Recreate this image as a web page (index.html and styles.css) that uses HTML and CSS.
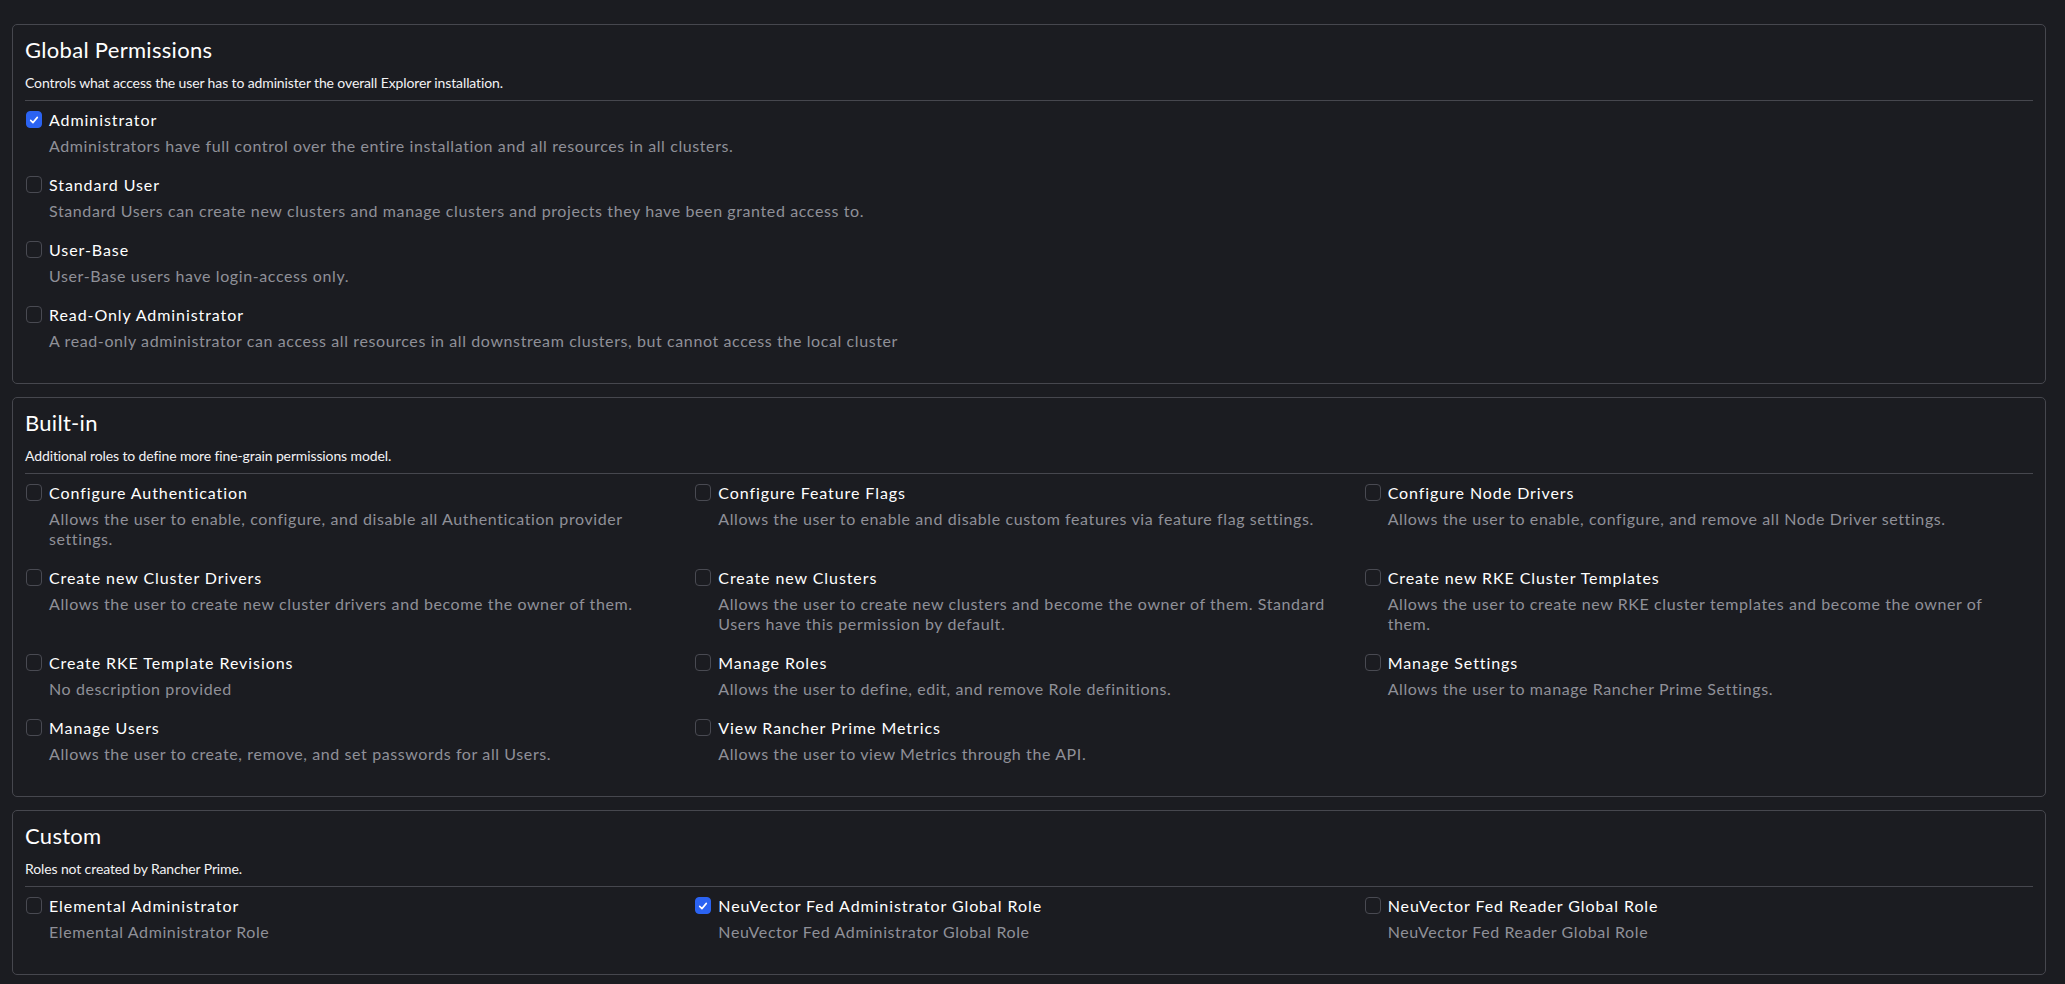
FILE: index.html
```html
<!DOCTYPE html>
<html lang="en">
<head>
<meta charset="utf-8">
<title>Global Permissions</title>
<link rel="stylesheet" href="styles.css">
</head>
<body>
<div class="page">

  <section class="box">
    <header class="box-head">
      <h3 class="box-title">Global Permissions</h3>
      <p class="box-sub">Controls what access the user has to administer the overall Explorer installation.</p>
    </header>
    <div class="list">
      <div class="item">
        <span class="cb checked"><svg viewBox="0 0 16 16"><path d="M4.2 8.4l2.6 2.6 5-6" /></svg></span>
        <div class="text"><div class="label">Administrator</div><div class="desc">Administrators have full control over the entire installation and all resources in all clusters.</div></div>
      </div>
      <div class="item">
        <span class="cb"></span>
        <div class="text"><div class="label">Standard User</div><div class="desc">Standard Users can create new clusters and manage clusters and projects they have been granted access to.</div></div>
      </div>
      <div class="item">
        <span class="cb"></span>
        <div class="text"><div class="label">User-Base</div><div class="desc">User-Base users have login-access only.</div></div>
      </div>
      <div class="item">
        <span class="cb"></span>
        <div class="text"><div class="label">Read-Only Administrator</div><div class="desc">A read-only administrator can access all resources in all downstream clusters, but cannot access the local cluster</div></div>
      </div>
    </div>
  </section>

  <section class="box">
    <header class="box-head">
      <h3 class="box-title">Built-in</h3>
      <p class="box-sub">Additional roles to define more fine-grain permissions model.</p>
    </header>
    <div class="grid">
      <div class="item">
        <span class="cb"></span>
        <div class="text"><div class="label">Configure Authentication</div><div class="desc">Allows the user to enable, configure, and disable all Authentication provider settings.</div></div>
      </div>
      <div class="item">
        <span class="cb"></span>
        <div class="text"><div class="label">Configure Feature Flags</div><div class="desc">Allows the user to enable and disable custom features via feature flag settings.</div></div>
      </div>
      <div class="item">
        <span class="cb"></span>
        <div class="text"><div class="label">Configure Node Drivers</div><div class="desc">Allows the user to enable, configure, and remove all Node Driver settings.</div></div>
      </div>
      <div class="item">
        <span class="cb"></span>
        <div class="text"><div class="label">Create new Cluster Drivers</div><div class="desc">Allows the user to create new cluster drivers and become the owner of them.</div></div>
      </div>
      <div class="item">
        <span class="cb"></span>
        <div class="text"><div class="label">Create new Clusters</div><div class="desc">Allows the user to create new clusters and become the owner of them. Standard Users have this permission by default.</div></div>
      </div>
      <div class="item">
        <span class="cb"></span>
        <div class="text"><div class="label">Create new RKE Cluster Templates</div><div class="desc">Allows the user to create new RKE cluster templates and become the owner of them.</div></div>
      </div>
      <div class="item">
        <span class="cb"></span>
        <div class="text"><div class="label">Create RKE Template Revisions</div><div class="desc">No description provided</div></div>
      </div>
      <div class="item">
        <span class="cb"></span>
        <div class="text"><div class="label">Manage Roles</div><div class="desc">Allows the user to define, edit, and remove Role definitions.</div></div>
      </div>
      <div class="item">
        <span class="cb"></span>
        <div class="text"><div class="label">Manage Settings</div><div class="desc">Allows the user to manage Rancher Prime Settings.</div></div>
      </div>
      <div class="item">
        <span class="cb"></span>
        <div class="text"><div class="label">Manage Users</div><div class="desc">Allows the user to create, remove, and set passwords for all Users.</div></div>
      </div>
      <div class="item">
        <span class="cb"></span>
        <div class="text"><div class="label">View Rancher Prime Metrics</div><div class="desc">Allows the user to view Metrics through the API.</div></div>
      </div>
    </div>
  </section>

  <section class="box">
    <header class="box-head">
      <h3 class="box-title">Custom</h3>
      <p class="box-sub">Roles not created by Rancher Prime.</p>
    </header>
    <div class="grid">
      <div class="item">
        <span class="cb"></span>
        <div class="text"><div class="label">Elemental Administrator</div><div class="desc">Elemental Administrator Role</div></div>
      </div>
      <div class="item">
        <span class="cb checked"><svg viewBox="0 0 16 16"><path d="M4.2 8.4l2.6 2.6 5-6" /></svg></span>
        <div class="text"><div class="label">NeuVector Fed Administrator Global Role</div><div class="desc">NeuVector Fed Administrator Global Role</div></div>
      </div>
      <div class="item">
        <span class="cb"></span>
        <div class="text"><div class="label">NeuVector Fed Reader Global Role</div><div class="desc">NeuVector Fed Reader Global Role</div></div>
      </div>
    </div>
  </section>

</div>
</body>
</html>
```

FILE: styles.css
```css
* { box-sizing: border-box; }

html, body {
  margin: 0;
  padding: 0;
  background: #1b1c21;
}

body {
  font-family: Lato, "Noto Sans", sans-serif;
  color: #ffffff;
}

.page {
  display: flex;
  flex-direction: column;
  gap: 13px;
  padding: 24px 19px 0 12px;
}

.box {
  border: 1px solid #46474e;
  border-radius: 5px;
  padding: 0 12px 12px;
}

.box-head {
  padding-top: 11px;
  padding-bottom: 7px;
  border-bottom: 1px solid #46474e;
  margin-bottom: 9px;
}

.box-title {
  margin: 0;
  font-size: 22px;
  line-height: 28px;
  font-weight: 400;
  letter-spacing: 0.3px;
  color: #ffffff;
}

.box-sub {
  margin: 9px 0 0;
  font-size: 14px;
  line-height: 20px;
  letter-spacing: -0.12px;
  color: #f2f2f4;
}

.list {
  display: flex;
  flex-direction: column;
  gap: 19px;
  padding-bottom: 20px;
}

.grid {
  display: grid;
  grid-template-columns: repeat(3, 1fr);
  row-gap: 19px;
  padding-bottom: 20px;
}

.item {
  display: flex;
  align-items: flex-start;
  padding-right: 24px;
}

.cb {
  flex: none;
  width: 16px;
  height: 17px;
  margin: 1px 7px 0 1px;
  border: 1px solid #494a52;
  border-radius: 4px;
  display: flex;
  align-items: center;
  justify-content: center;
}

.cb.checked {
  background: #2b63f2;
  border-color: #2b63f2;
}

.cb svg {
  width: 14px;
  height: 14px;
  fill: none;
  stroke: #ffffff;
  stroke-width: 1.8;
  stroke-linecap: round;
  stroke-linejoin: round;
}

.text {
  min-width: 0;
}

.label {
  font-size: 16px;
  line-height: 20px;
  letter-spacing: 0.92px;
  color: #ffffff;
}

.desc {
  margin-top: 6px;
  font-size: 16px;
  line-height: 20px;
  letter-spacing: 0.6px;
  color: #8f9098;
}
```
